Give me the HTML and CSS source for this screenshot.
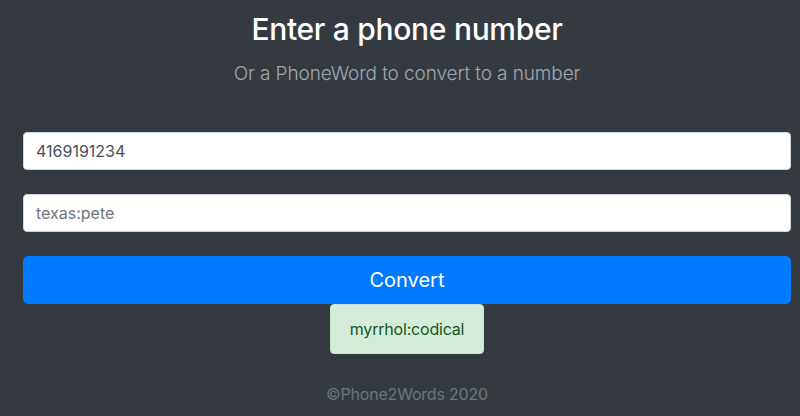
FILE: index.html
```html
<!DOCTYPE html>
<html lang="en">
<head>
<meta charset="utf-8">
<title>Phone2Words</title>
<link rel="stylesheet" href="styles.css">
</head>
<body>
<main class="page">
  <header class="hero">
    <h1 class="title">Enter a phone number</h1>
    <p class="lead">Or a PhoneWord to convert to a number</p>
  </header>
  <form class="form">
    <input class="field field-value" type="text" value="4169191234">
    <input class="field" type="text" placeholder="texas:pete">
    <button class="btn" type="button">Convert</button>
  </form>
  <div class="result">myrrhol:codical</div>
  <footer class="footer">©Phone2Words 2020</footer>
</main>
</body>
</html>
```
FILE: styles.css
```css
* { box-sizing: border-box; }
html, body {
  margin: 0;
  height: 100%;
  background: #343a40;
}
body {
  font-family: Inter, "Noto Sans", sans-serif;
  color: #fff;
}
.page {
  padding: 10px 9px 0 23px;
  display: flex;
  flex-direction: column;
  align-items: center;
}
.hero {
  text-align: center;
}
.title {
  margin: 0;
  font-size: 30px;
  font-weight: 500;
  line-height: 38px;
  letter-spacing: -0.3px;
}
.lead {
  margin: 14px 0 0;
  font-size: 19px;
  font-weight: 300;
  line-height: 24px;
  letter-spacing: -0.1px;
  color: #a2a7ad;
}
.form {
  width: 100%;
  margin-top: 46px;
  display: flex;
  flex-direction: column;
  gap: 24px;
}
.field {
  display: block;
  width: 100%;
  height: 38px;
  padding: 6px 12px;
  border: 1px solid #ced4da;
  border-radius: 4px;
  background: #fff;
  font-family: inherit;
  font-size: 16px;
  color: #495057;
}
.field::placeholder { color: #6c757d; opacity: 1; }
.btn {
  display: block;
  width: 100%;
  height: 48px;
  border: 1px solid #007bff;
  border-radius: 5px;
  background: #007bff;
  color: #fff;
  font-family: inherit;
  font-size: 20px;
}
.result {
  width: 154px;
  height: 50px;
  display: flex;
  align-items: center;
  justify-content: center;
  background: #d4edda;
  border: 1px solid #c3e6cb;
  border-radius: 4px;
  color: #155724;
  font-size: 16px;
  letter-spacing: -0.2px;
}
.footer {
  margin-top: 30px;
  font-size: 16px;
  letter-spacing: -0.2px;
  color: #6c757d;
}
```
